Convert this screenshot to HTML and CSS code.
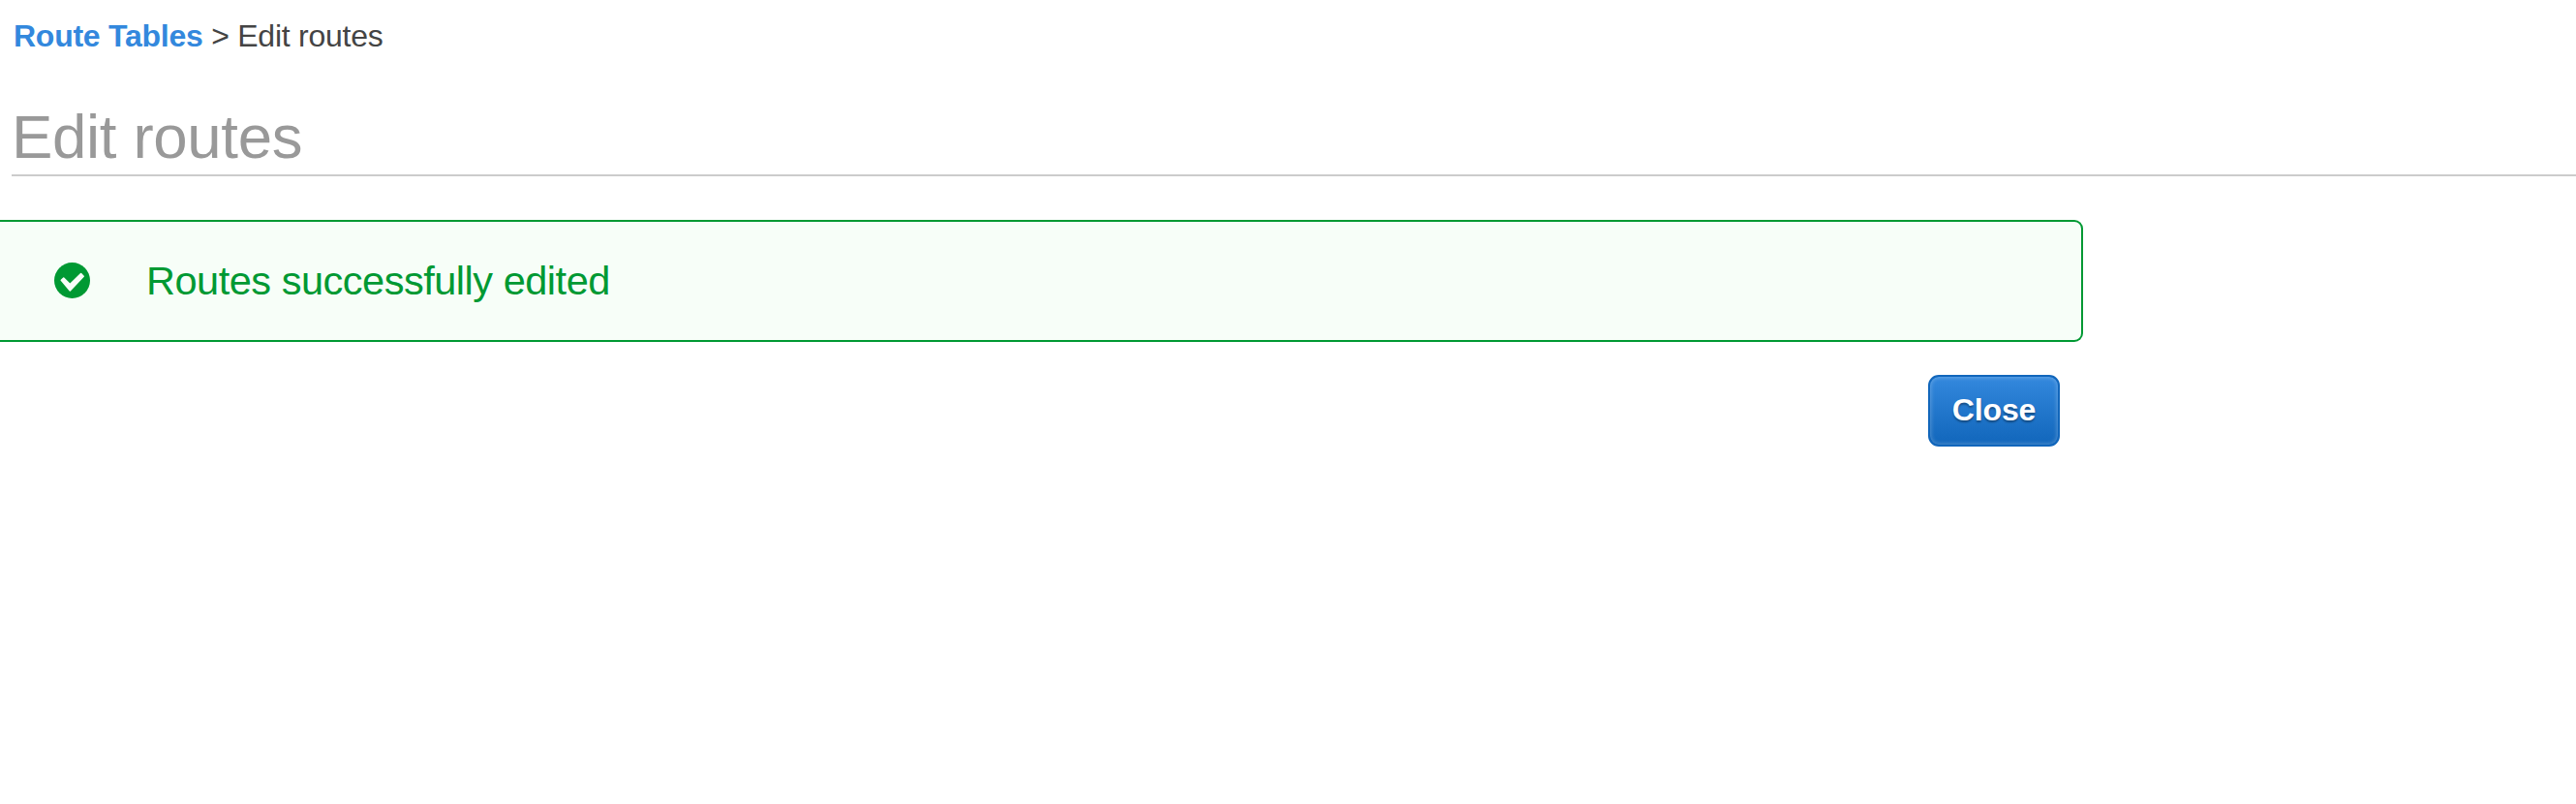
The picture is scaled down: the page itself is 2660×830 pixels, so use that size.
FILE: index.html
```html
<!DOCTYPE html>
<html lang="en">
<head>
<meta charset="utf-8">
<title>Edit routes</title>
<link rel="stylesheet" href="styles.css">
</head>
<body>
<nav class="breadcrumb"><a class="breadcrumb-link">Route Tables</a> &gt; <span>Edit routes</span></nav>
<h1 class="page-title">Edit routes</h1>
<main class="content">
  <div class="alert">
    <svg class="alert-icon" viewBox="0 0 37 37"><circle cx="18.5" cy="18.5" r="18.5" fill="#093"/><path d="M7.3 18.3L9.7 16.2 16.3 22.5 27.6 11.6 30.2 14.2 16.3 28.9z" fill="#f7fef8" stroke="#f7fef8" stroke-width="1.6" stroke-linejoin="round"/></svg>
    <span class="alert-text">Routes successfully edited</span>
  </div>
  <div class="actions"><button class="button">Close</button></div>
</main>
</body>
</html>
```
FILE: styles.css
```css
body {
  margin: 0;
  background: #fff;
  font-family: "Liberation Sans", Arial, sans-serif;
  color: #444;
  overflow: hidden;
}
.breadcrumb {
  padding: 17px 0 0 14px;
  font-size: 32px;
  letter-spacing: -0.25px;
  line-height: 40px;
}
.breadcrumb-link {
  color: #38d;
  font-weight: bold;
}
.page-title {
  margin: 48px 0 0 12px;
  height: 75px;
  border-bottom: 2px solid #ccc;
  font-size: 63.6px;
  letter-spacing: -0.35px;
  font-weight: normal;
  line-height: 71px;
  color: #999;
}
.content {
  width: 2151px;
  padding-top: 45px;
}
.alert {
  box-sizing: border-box;
  display: flex;
  align-items: center;
  height: 126px;
  padding-left: 56px;
  gap: 58px;
  border: 2px solid #093;
  border-left: 0;
  border-radius: 0 9px 9px 0;
  background: #f7fef8;
  color: #093;
  font-size: 41.5px;
  letter-spacing: -0.48px;
}
.alert-icon {
  width: 37px;
  height: 37px;
  margin-top: -2px;
}
.alert-text {
  line-height: 48px;
}
.actions {
  display: flex;
  justify-content: flex-end;
  padding: 34px 24px 0 0;
}
.button {
  box-sizing: border-box;
  width: 136px;
  height: 74px;
  padding: 0 0 1px;
  border: 2px solid #1166bb;
  border-radius: 11px;
  background: linear-gradient(#3388dd, #1166bb);
  box-shadow: inset 0 0 4px 1px rgba(255, 255, 255, 0.25);
  font: bold 32px "Liberation Sans", Arial, sans-serif;
  letter-spacing: -0.1px;
  color: #fff;
  text-shadow: 0 2px 2px rgba(0, 0, 0, 0.35);
}
```
